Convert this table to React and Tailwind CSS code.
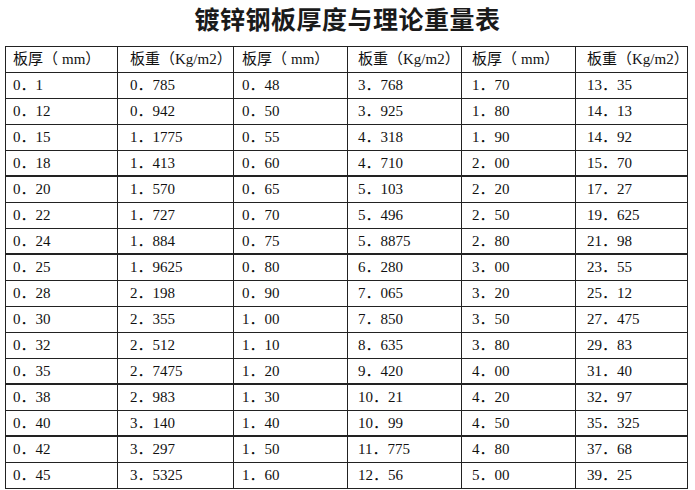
import React from "react";

const P = ({ c }) => <span className="inline-block w-[1em]">{c}</span>;

const header = [
  ["板厚", "mm"],
  ["板重", "Kg/m2"],
  ["板厚", "mm"],
  ["板重", "Kg/m2"],
  ["板厚", "mm"],
  ["板重", "Kg/m2"],
];

const rows = [
  ["0．1", "0．785", "0．48", "3．768", "1．70", "13．35"],
  ["0．12", "0．942", "0．50", "3．925", "1．80", "14．13"],
  ["0．15", "1．1775", "0．55", "4．318", "1．90", "14．92"],
  ["0．18", "1．413", "0．60", "4．710", "2．00", "15．70"],
  ["0．20", "1．570", "0．65", "5．103", "2．20", "17．27"],
  ["0．22", "1．727", "0．70", "5．496", "2．50", "19．625"],
  ["0．24", "1．884", "0．75", "5．8875", "2．80", "21．98"],
  ["0．25", "1．9625", "0．80", "6．280", "3．00", "23．55"],
  ["0．28", "2．198", "0．90", "7．065", "3．20", "25．12"],
  ["0．30", "2．355", "1．00", "7．850", "3．50", "27．475"],
  ["0．32", "2．512", "1．10", "8．635", "3．80", "29．83"],
  ["0．35", "2．7475", "1．20", "9．420", "4．00", "31．40"],
  ["0．38", "2．983", "1．30", "10．21", "4．20", "32．97"],
  ["0．40", "3．140", "1．40", "10．99", "4．50", "35．325"],
  ["0．42", "3．297", "1．50", "11．775", "4．80", "37．68"],
  ["0．45", "3．5325", "1．60", "12．56", "5．00", "39．25"],
];

const pads = ["pl-[7px]", "pl-[12px]", "pl-[8px]", "pl-[10px]", "pl-[10px]", "pl-[11px]"];
const thick = new Set([3, 6, 11, 13]);

export default function App() {
  return (
    <div
      className="w-[695px] h-[490px] bg-white overflow-hidden text-[#111]"
      style={{ fontFamily: '"Liberation Serif", "Noto Sans CJK SC", serif' }}
    >
      <div
        className="h-[46px] flex items-center justify-center text-[25px] font-bold tracking-[0.5px] text-[#1a1a1a] pb-[8px]"
        style={{ fontFamily: '"Noto Sans CJK SC", sans-serif' }}
      >
        镀锌钢板厚度与理论重量表
      </div>
      <div className="ml-[5px] w-[683px] border-l border-t border-[#222] grid grid-cols-[112px_116px_114px_114px_114px_112px] text-[15px]">
        {header.map(([a, b], i) => (
          <div
            key={"h" + i}
            className={`h-[26px] border-r border-b border-[#222] flex items-center whitespace-nowrap ${pads[i]}`}
          >
            <span>{a}</span>
            <P c="（" />
            <span className={b === "mm" ? "pl-[4px]" : ""}>{b}</span>
            <P c="）" />
          </div>
        ))}
        {rows.map((r, ri) =>
          r.map((c, ci) => (
            <div
              key={ri + "-" + ci}
              className={`h-[26px] border-r border-[#222] flex items-center whitespace-nowrap ${pads[ci]} ${
                thick.has(ri) ? "border-b-2" : "border-b"
              }`}
            >
              {c}
            </div>
          ))
        )}
      </div>
    </div>
  );
}
